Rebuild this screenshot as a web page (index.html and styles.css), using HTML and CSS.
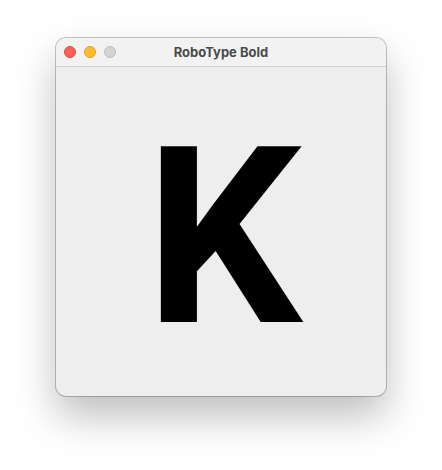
FILE: index.html
```html
<!DOCTYPE html>
<html>
<head>
<meta charset="utf-8">
<link rel="stylesheet" href="styles.css">
</head>
<body>
<div class="window">
  <div class="titlebar">
    <div class="lights">
      <span class="light red"></span>
      <span class="light yellow"></span>
      <span class="light gray"></span>
    </div>
    <div class="title">RoboType Bold</div>
  </div>
  <div class="content">
    <div class="glyph">K</div>
  </div>
</div>
</body>
</html>
```
FILE: styles.css
```css
html, body {
  margin: 0;
  padding: 0;
  background: #ffffff;
}
body {
  width: 442px;
  height: 470px;
  padding-top: 38px;
  padding-left: 56px;
  box-sizing: border-box;
  font-family: "Inter", "Liberation Sans", sans-serif;
}
.window {
  width: 330px;
  height: 358px;
  border-radius: 10px;
  background: #eeeeee;
  box-shadow: 0 0 0 1px rgba(0,0,0,0.22), 0 20px 40px rgba(0,0,0,0.26);
  display: flex;
  flex-direction: column;
  overflow: hidden;
}
.titlebar {
  height: 28px;
  flex: none;
  position: relative;
  background: #f2f2f2;
  border-bottom: 1px solid #d0d0d0;
  display: flex;
  align-items: center;
  justify-content: center;
}
.lights {
  position: absolute;
  left: 8px;
  top: 8px;
  display: flex;
  gap: 8px;
}
.light {
  width: 12px;
  height: 12px;
  border-radius: 50%;
  box-sizing: border-box;
}
.red { background: #fe5f57; border: 1px solid #e0443e; }
.yellow { background: #febc2e; border: 1px solid #dea123; }
.gray { background: #d3d3d3; border: 1px solid #bdbdbd; }
.title {
  font-size: 13px;
  font-weight: 700;
  color: #4a4a4a;
}
.content {
  flex: 1;
  display: flex;
  justify-content: center;
  align-items: flex-start;
}
.glyph {
  font-family: "Roboto", sans-serif;
  font-weight: 700;
  font-size: 246px;
  line-height: 1;
  color: #000;
  margin-top: 48px;
  padding-left: 5px;
}
```
